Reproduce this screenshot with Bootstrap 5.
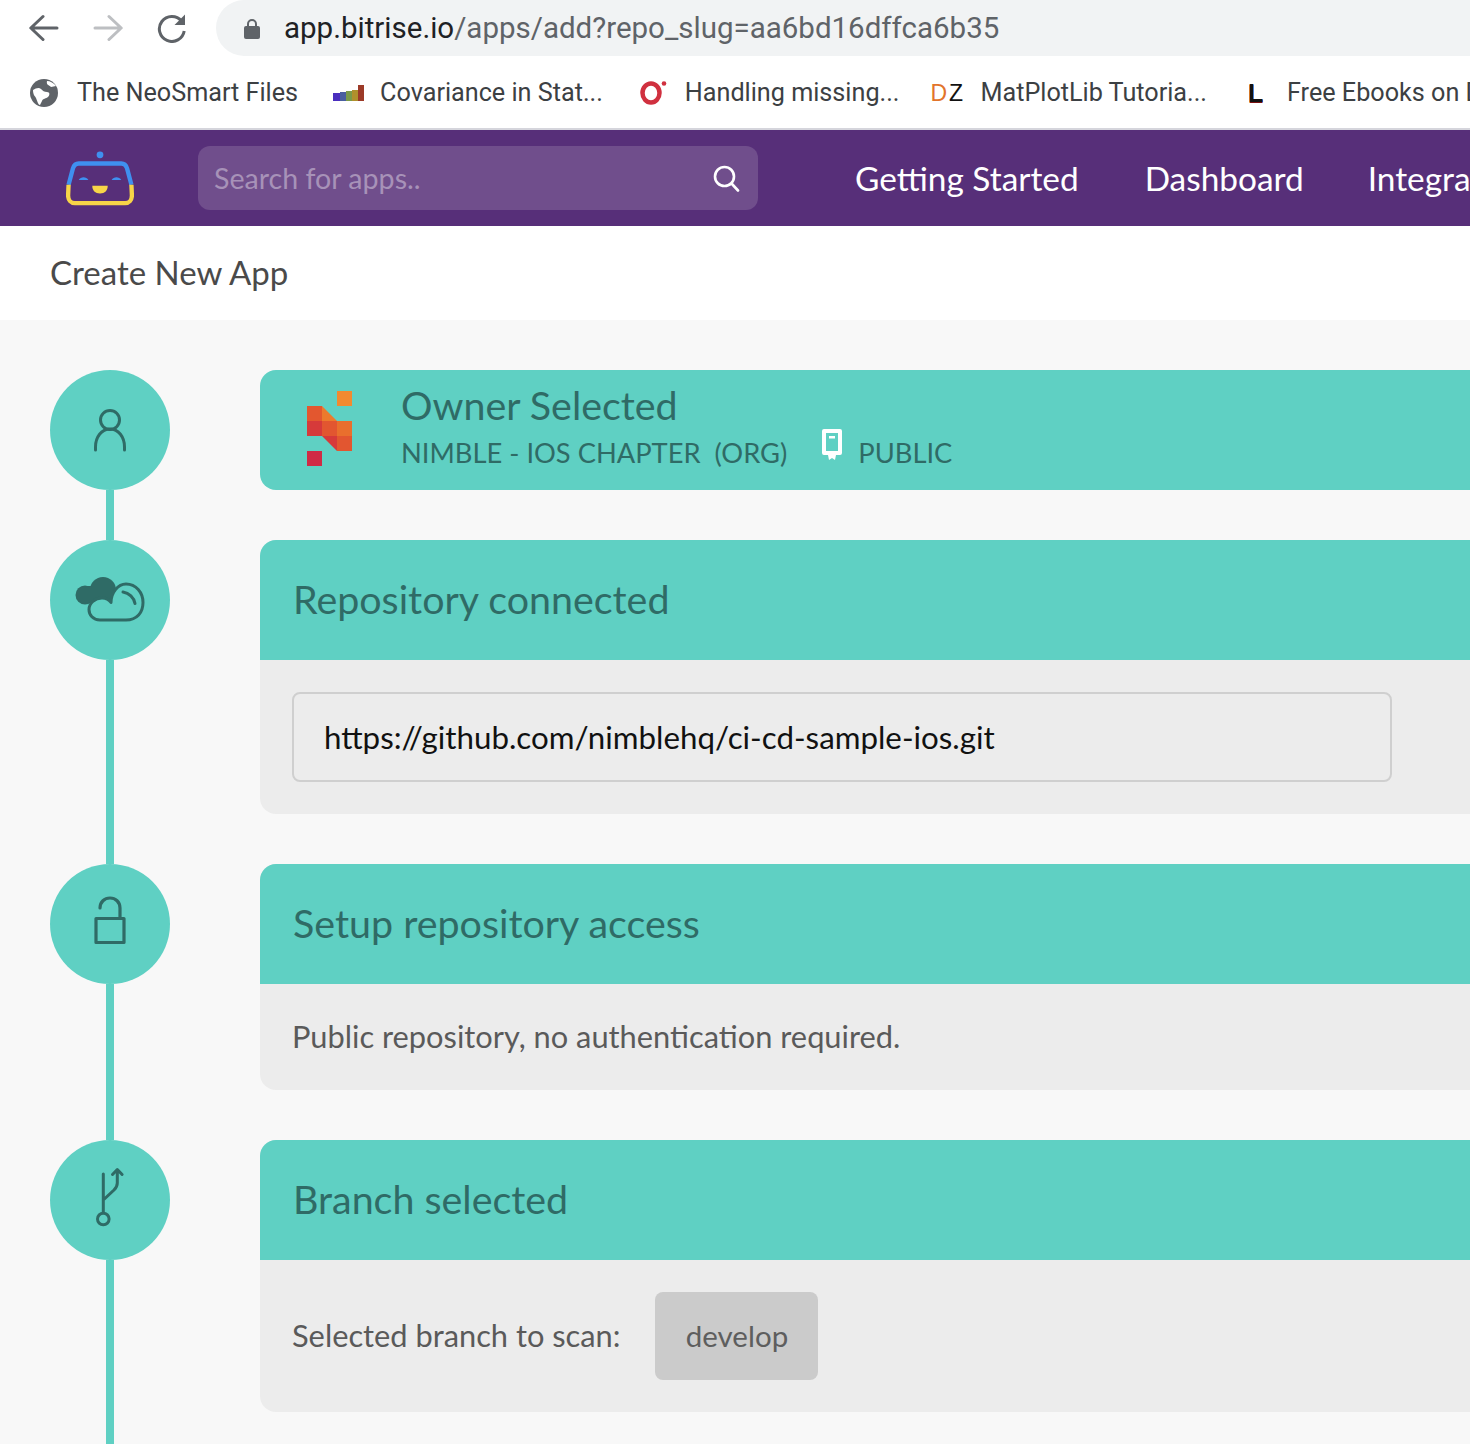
<!DOCTYPE html>
<html lang="en">
<head>
  <meta charset="UTF-8" />
  <meta name="viewport" content="width=device-width, initial-scale=1" />
  <title>Create New App</title>
  <link href="https://cdn.jsdelivr.net/npm/bootstrap@5.3.0/dist/css/bootstrap.min.css" rel="stylesheet" />
  <style>
    html, body { overflow: hidden; height: 1444px; }
    body { background: #f8f8f8; font-family: Lato, "Liberation Sans", sans-serif; color: #5a5a5a; }
    .chrome-top { height: 128px; background: #fff; font-family: Roboto, "Liberation Sans", sans-serif; }
    .tool-row { height: 56px; padding-left: 29px; }
    .tool-btn { width: 30px; height: 30px; flex: 0 0 30px; }
    .tool-gap { margin-left: 34px; }
    .addr-bar { width: 1400px; flex-shrink: 0; height: 56px; margin-left: 29px; padding: 1px 0 0 28px; background: #f1f3f4; border-radius: 28px 0 0 28px; font-size: 29.5px; white-space: nowrap; }
    .addr-host { color: #202124; margin-left: 24px; }
    .addr-path { color: #5f6368; }
    .mark-row { height: 72px; padding: 2px 0 0 30px; font-size: 25.2px; color: #3c4043; white-space: nowrap; }
    .mark-item { flex-shrink: 0; margin-right: 35px; }
    .mark-item-dz { margin-right: 33px; }
    .mark-ico { width: 32px; height: 28px; flex: 0 0 32px; margin-right: 15px; }
    .dz-txt { font-family: "Liberation Sans", sans-serif; font-size: 23px; line-height: 28px; letter-spacing: 2px; }
    .dz-shift { margin-left: -4px; margin-right: 18px; }
    .d-orange { color: #e2742b; }
    .z-black { color: #111; }
    .l-txt { padding-left: 8px; color: #111; font-weight: 700; font-size: 25px; text-shadow: 0 1px #7a1010; }
    .top-nav { height: 98px; background: #572f79; border-top: 2px solid #d5d5dc; padding: 0 0 0 66px; flex-wrap: nowrap; justify-content: flex-start; }
    .bot-logo { flex-shrink: 0; }
    .search-box { width: 560px; height: 64px; flex-shrink: 0; margin-left: 64px; padding: 0 18px 0 16px; background: #704e8c; border-radius: 12px; color: #a792b8; font-size: 28.6px; }
    .top-nav .nav { flex-wrap: nowrap; margin-left: 64px; }
    .top-nav .nav-link { color: #fff; font-size: 33.4px; padding: 0 33px; white-space: nowrap; }
    .nav-last { margin-left: -2px; }
    .page-title { height: 94px; padding-left: 50px; background: #fff; font-size: 33px; color: #4a4a4a; }
    .steps { padding: 50px 0 0 50px; }
    .step { flex-wrap: nowrap; }
    .step-rail { width: 120px; flex: 0 0 120px; margin-right: 90px; }
    .step-dot { width: 120px; height: 120px; background: #5fd0c3; flex-shrink: 0; }
    .step-line { width: 8px; flex-grow: 1; background: #5fd0c3; }
    .step-card { width: 1300px; flex-shrink: 0; margin-bottom: 50px; border-radius: 16px; overflow: hidden; background: #ececec; }
    .step-head { height: 120px; background: #5fd0c3; color: #2f6b66; font-size: 39.4px; padding: 0 0 2px 33px; }
    .owner-logo { width: 60px; height: 90px; margin-left: -1px; margin-right: 49px; flex-shrink: 0; }
    .owner-text { padding-bottom: 2px; }
    .owner-name { font-size: 39.4px; line-height: 44px; }
    .owner-sub { font-size: 27.3px; line-height: 40px; margin-top: 6px; }
    .pub-ico { margin: -8px 16px 9px 35px; }
    .step-body { padding: 32px; font-size: 30.8px; line-height: 42px; color: #5a5a5a; }
    .repo-box { width: 1100px; height: 90px; padding-left: 30px; border: 2px solid #cfcfcf; border-radius: 8px; font-size: 31.3px; color: #111; }
    .branch-pill { width: 163px; height: 88px; margin-left: 35px; background: #cbcbcb; border-radius: 8px; color: #5e5e5e; font-size: 29.5px; }
  </style>
</head>
<body>

  <div class="chrome-top">
    <div class="tool-row d-flex align-items-center">
      <svg class="tool-btn" viewBox="0 0 30 30" fill="none" stroke="#5f6368" stroke-width="3" stroke-linecap="round" stroke-linejoin="round"><path d="M28 15H2M14 3.500 1.800 15 14 26.500"/></svg>
      <svg class="tool-btn tool-gap" viewBox="0 0 30 30" fill="none" stroke="#bdbfc2" stroke-width="3" stroke-linecap="round" stroke-linejoin="round"><path d="M2 15h26M16 3.500 28.200 15 16 26.500"/></svg>
      <svg class="tool-btn tool-gap" viewBox="0 0 30 30" fill="none"><path d="M24.500 8A12.500 12.500 0 1 0 27.200 18" stroke="#5f6368" stroke-width="3"/><path d="M28 1.500V12H17.500Z" fill="#5f6368"/></svg>
      <div class="addr-bar d-flex align-items-center">
        <svg width="16" height="20" viewBox="0 0 16 20"><rect y="7" width="16" height="13" rx="2" fill="#5f6368"/><path d="M4 8V5a4 4 0 0 1 8 0v3" fill="none" stroke="#5f6368" stroke-width="2"/></svg>
        <span class="addr-host">app.bitrise.io<span class="addr-path">/apps/add?repo_slug=aa6bd16dffca6b35</span></span>
      </div>
    </div>
    <div class="mark-row d-flex align-items-center">
      <div class="mark-item d-flex align-items-center">
        <svg class="mark-ico" viewBox="0 0 32 28"><circle cx="14" cy="14" r="14" fill="#5f6368"/><path d="M3 11c3-2 6-3 8-1s3 3 6 3 3 3 1 5-5 1-6 4l-2 4c-2 0-3-5-4-7s-3-3-3-8ZM17 2c3 0 7 2 9 5l-5 1c-2-2-5-2-4-6Z" fill="#fff"/></svg>
        <span>The NeoSmart Files</span>
      </div>
      <div class="mark-item d-flex align-items-center">
        <svg class="mark-ico" viewBox="0 0 32 28"><rect x="0" y="14" width="7" height="8" fill="#4a2ebe"/><rect x="7" y="13" width="6" height="9" fill="#4a5fa0"/><rect x="13" y="12" width="6" height="10" fill="#7a9a4a"/><rect x="19" y="11" width="6" height="11" fill="#b0902c"/><rect x="25" y="6" width="6" height="16" fill="#9c3a28"/></svg>
        <span>Covariance in Stat...</span>
      </div>
      <div class="mark-item d-flex align-items-center">
        <svg class="mark-ico" viewBox="0 0 32 28"><ellipse cx="13" cy="14" rx="8.500" ry="9.500" fill="none" stroke="#d0303f" stroke-width="4.500"/><circle cx="26" cy="4.500" r="2.300" fill="#d0303f"/></svg>
        <span>Handling missing...</span>
      </div>
      <div class="mark-item mark-item-dz d-flex align-items-center">
        <span class="mark-ico dz-txt dz-shift"><span class="d-orange">D</span><span class="z-black">Z</span></span>
        <span>MatPlotLib Tutoria...</span>
      </div>
      <div class="mark-item d-flex align-items-center">
        <span class="mark-ico dz-txt l-txt">L</span>
        <span>Free Ebooks on Data</span>
      </div>
    </div>
  </div>

  <nav class="navbar top-nav d-flex align-items-center">
    <svg class="bot-logo" width="68" height="58" viewBox="0 0 70 60" fill="none">
      <circle cx="35" cy="6" r="3.500" fill="#3f90f0"/>
      <path d="M2.500 37 7 20c1-3 3-5 6-5h44c3 0 5 2 6 5l4.500 17" stroke="#3f90f0" stroke-width="4.500"/>
      <path d="M2.500 37 2 48c0 5 3 8 7 8h52c4 0 7-3 7-8l-.5-11" stroke="#f7d548" stroke-width="4.500"/>
      <path d="M13 32a6 6 0 0 1 10 0ZM47 32a6 6 0 0 1 10 0Z" fill="#3f90f0"/>
      <path d="M27 38h16c0 5-3 8-8 8s-8-3-8-8Z" fill="#f7d548"/>
    </svg>
    <div class="search-box d-flex align-items-center justify-content-between">
      <span>Search for apps..</span>
      <svg width="28" height="28" viewBox="0 0 28 28" fill="none" stroke="#fff" stroke-width="2.600" stroke-linecap="round"><circle cx="12.500" cy="12.500" r="9.500"/><path d="m20 20 6 6.500"/></svg>
    </div>
    <ul class="nav">
      <li class="nav-item"><a class="nav-link" href="#">Getting Started</a></li>
      <li class="nav-item"><a class="nav-link" href="#">Dashboard</a></li>
      <li class="nav-item nav-last"><a class="nav-link" href="#">Integrations</a></li>
    </ul>
  </nav>

  <div class="page-title d-flex align-items-center">Create New App</div>

  <div class="steps">
    <div class="step d-flex">
      <div class="step-rail d-flex flex-column align-items-center">
        <div class="step-dot rounded-circle">
          <svg width="120" height="120" viewBox="0 0 120 120" fill="none" stroke="#2f6b66" stroke-width="3" stroke-linecap="round"><circle cx="60" cy="50" r="9.500"/><path d="M45.500 80v-3c0-10 6-18 14.500-18s14.500 8 14.500 18v3"/></svg>
        </div>
        <div class="step-line"></div>
      </div>
      <div class="step-card">
        <div class="step-head d-flex align-items-center">
          <svg class="owner-logo" viewBox="0 0 60 90">
            <rect x="45" y="7" width="15" height="15" fill="#f28a30"/>
            <rect x="15" y="22" width="15" height="15" fill="#e3572f"/>
            <path d="M30 22 45 37H30Z" fill="#ec7a2d"/>
            <rect x="15" y="37" width="15" height="15" fill="#d63a3a"/>
            <rect x="30" y="37" width="15" height="15" fill="#e25630"/>
            <rect x="45" y="37" width="15" height="15" fill="#e96f2d"/>
            <path d="M30 52H45V67Z" fill="#d63a3a"/>
            <rect x="45" y="52" width="15" height="15" fill="#e25630"/>
            <rect x="15" y="67" width="15" height="15" fill="#d02a45"/>
          </svg>
          <div class="owner-text">
            <div class="owner-name">Owner Selected</div>
            <div class="owner-sub d-flex align-items-center">
              <span>NIMBLE - IOS CHAPTER&nbsp; (ORG)</span>
              <svg class="pub-ico" width="20" height="31" viewBox="0 0 20 31"><path d="M2 0h16a2 2 0 0 1 2 2v22a2 2 0 0 1-2 2h-4l-1 5-3-2-3 2-1-5H2a2 2 0 0 1-2-2V2a2 2 0 0 1 2-2Z" fill="#fff"/><rect x="4" y="4" width="12" height="18" fill="#5fd0c3"/><rect x="7" y="7" width="6" height="2.500" fill="#fff"/></svg>
              <span>PUBLIC</span>
            </div>
          </div>
        </div>
      </div>
    </div>

    <div class="step d-flex">
      <div class="step-rail d-flex flex-column align-items-center">
        <div class="step-dot rounded-circle">
          <svg width="120" height="120" viewBox="0 0 120 120" fill="none">
            <circle cx="35" cy="55" r="9.500" fill="#2f6b66"/><circle cx="53" cy="50" r="13" fill="#2f6b66"/><rect x="35" y="46" width="24" height="14" fill="#2f6b66"/>
            <path d="M50 80c-7 0-11-5-11-10.500C39 63 45 58 52 58c3 0 7 1.500 9 4.500 0-10 7-18.500 15-18.500 10 0 17 8.500 17 18.500S87 80 76 80Z" fill="#5fd0c3" stroke="#2f6b66" stroke-width="3" stroke-linejoin="round"/>
            <path d="M73 52c6 1 11 5.500 12 11.500" stroke="#2f6b66" stroke-width="3" stroke-linecap="round"/>
          </svg>
        </div>
        <div class="step-line"></div>
      </div>
      <div class="step-card">
        <div class="step-head d-flex align-items-center">Repository connected</div>
        <div class="step-body"><div class="repo-box d-flex align-items-center">https://github.com/nimblehq/ci-cd-sample-ios.git</div></div>
      </div>
    </div>

    <div class="step d-flex">
      <div class="step-rail d-flex flex-column align-items-center">
        <div class="step-dot rounded-circle">
          <svg width="120" height="120" viewBox="0 0 120 120" fill="none" stroke="#2f6b66" stroke-width="3.200" stroke-linecap="round" stroke-linejoin="round"><path d="M50 44c0-6 4.500-10 10-10s10 4 10 10v10"/><rect x="46" y="54.500" width="28" height="24"/></svg>
        </div>
        <div class="step-line"></div>
      </div>
      <div class="step-card">
        <div class="step-head d-flex align-items-center">Setup repository access</div>
        <div class="step-body">Public repository, no authentication required.</div>
      </div>
    </div>

    <div class="step d-flex">
      <div class="step-rail d-flex flex-column align-items-center">
        <div class="step-dot rounded-circle">
          <svg width="120" height="120" viewBox="0 0 120 120" fill="none" stroke="#2f6b66" stroke-width="3" stroke-linecap="round" stroke-linejoin="round"><path d="M53.300 34v38M53.300 60 64 50c2-2 3.300-4 3.300-7V30M62.500 34.500l4.800-5 4.800 5"/><circle cx="53.300" cy="79" r="5.800"/></svg>
        </div>
        <div class="step-line"></div>
      </div>
      <div class="step-card">
        <div class="step-head d-flex align-items-center">Branch selected</div>
        <div class="step-body d-flex align-items-center">Selected branch to scan:<div class="branch-pill d-flex align-items-center justify-content-center">develop</div></div>
      </div>
    </div>
  </div>

  <script src="https://cdn.jsdelivr.net/npm/bootstrap@5.3.0/dist/js/bootstrap.bundle.min.js"></script>
</body>
</html>
